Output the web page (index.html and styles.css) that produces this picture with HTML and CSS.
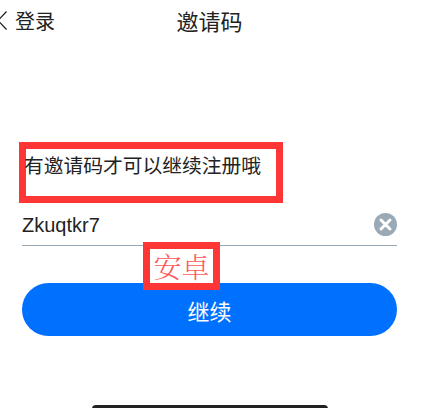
FILE: index.html
```html
<!DOCTYPE html>
<html lang="zh-CN">
<head>
    <meta charset="UTF-8">
    <meta name="viewport" content="width=device-width, initial-scale=1.0">
    <title>邀请码</title>
    <link rel="stylesheet" href="styles.css">
</head>
<body>
    <div class="screen">
        <header class="header">
            <a class="back">
                <svg class="back-icon" width="10" height="19" viewBox="0 0 10 19"><path d="M9.5 .5 L1 9.5 L9.5 18.5" fill="none" stroke="#222" stroke-width="1.3"/></svg>
                <span>登录</span>
            </a>
            <h1 class="title">邀请码</h1>
        </header>

        <div class="form">
            <div class="hint-box">
                <p class="hint">有邀请码才可以继续注册哦</p>
            </div>
            <div class="field">
                <span class="code">Zkuqtkr7</span>
                <svg class="clear" width="23" height="23" viewBox="0 0 23 23">
                    <circle cx="11.5" cy="11.5" r="11.5" fill="#9aa9b6"/>
                    <path d="M7 7 L16 16 M16 7 L7 16" stroke="#fff" stroke-width="3" stroke-linecap="round"/>
                </svg>
            </div>
            <div class="watermark">安卓</div>
            <button class="submit">继续</button>
        </div>

        <div class="home-bar"></div>
    </div>
</body>
</html>
```

FILE: styles.css
```css
* {
    box-sizing: border-box;
}

body {
    margin: 0;
    background: #fff;
    font-family: "Noto Sans CJK SC", "Liberation Sans", sans-serif;
    color: #222;
}

.screen {
    position: relative;
    width: 426px;
    height: 408px;
    overflow: hidden;
    padding-right: 7px;
}

.header {
    position: relative;
    display: flex;
    justify-content: center;
    align-items: center;
    height: 40px;
}

.back {
    position: absolute;
    left: -3px;
    top: 0;
    height: 40px;
    display: flex;
    align-items: center;
    gap: 8px;
    font-size: 20px;
}

.title {
    margin: 0;
    font-size: 22px;
    font-weight: 400;
}

.form {
    position: relative;
    display: flex;
    flex-direction: column;
    padding: 102px 22px 0;
}

.hint-box {
    width: 264px;
    height: 61px;
    margin-left: -3px;
    padding-top: 2px;
    border: 7px solid #ff3636;
}

.hint {
    margin: 0 0 0 -2px;
    font-size: 19.75px;
    line-height: 28px;
    white-space: nowrap;
}

.field {
    display: flex;
    justify-content: space-between;
    align-items: center;
    height: 43px;
    border-bottom: 1px solid #9aa9b6;
}

.code {
    padding-top: 2px;
    font-family: "Liberation Sans", sans-serif;
    font-size: 20px;
}

.watermark {
    position: absolute;
    left: 143px;
    top: 202px;
    width: 77px;
    height: 48px;
    border: 7px solid #ff3636;
    background: #fff;
    color: #ff5a5a;
    font-family: "Noto Serif CJK SC", "Noto Sans CJK SC", serif;
    font-weight: 300;
    font-size: 28px;
    line-height: 34px;
    text-align: center;
    white-space: nowrap;
}

.submit {
    height: 53px;
    margin-top: 37px;
    border: 0;
    border-radius: 27px;
    background: #0070ff;
    color: #fff;
    font-family: inherit;
    font-size: 22px;
}

.home-bar {
    position: absolute;
    left: 92px;
    top: 405px;
    width: 236px;
    height: 8px;
    border-radius: 8px;
    background: #222;
}
```
